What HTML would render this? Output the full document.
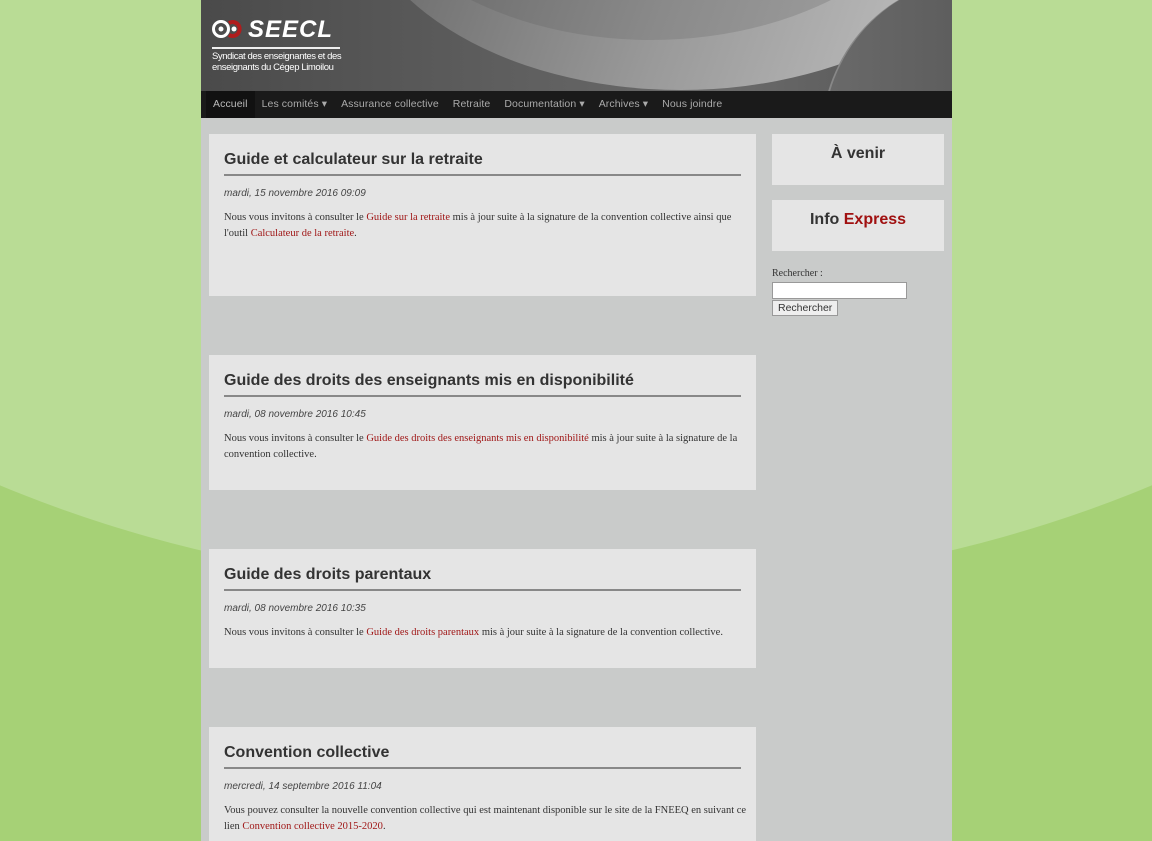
<!DOCTYPE html>
<html><head><meta charset="utf-8"><style>
*{margin:0;padding:0;box-sizing:border-box}
html,body{width:1152px;height:841px;overflow:hidden}
body{position:relative;background:#a6d176;font-family:"Liberation Sans",sans-serif}
.bgc{position:absolute;left:-423px;top:-594px;width:1998px;height:1188px;border-radius:50%;background:#b9dc95}
.wrap{position:absolute;left:201px;top:0;width:751px;height:841px;background:#c9cbca;overflow:hidden}
.hdr{height:91px;background:linear-gradient(90deg,#4a4a4a,#5e5e5e 40%,#6a6a6a 70%,#555);position:relative;overflow:hidden}
.sw{position:absolute;left:150px;top:-330px;width:660px;height:420px;border-radius:50%;background:linear-gradient(110deg,#707070 20%,#9a9a9a 55%,#b8b8b8 85%);}
.sw3{position:absolute;left:150px;top:-360px;width:600px;height:400px;border-radius:50%;background:linear-gradient(110deg,#666 20%,#8a8a8a 60%,#a5a5a5)}
.sw2{position:absolute;left:620px;top:-20px;width:300px;height:320px;border-radius:50%;border-left:2px solid #888;background:linear-gradient(90deg,#6a6a6a,#4e4e4e)}
.logo{position:absolute;left:11px;top:16px;color:#fff}
.logo b{font-size:24px;font-style:italic;letter-spacing:1px;margin-left:36px}
.logo .c{position:absolute;left:0;top:1px;width:32px;height:24px}
.logo .l{width:128px;height:2px;background:#eee;margin:3px 0 3px}
.logo small{display:block;font-size:9.5px;line-height:10.5px;letter-spacing:-0.4px}
.nav{height:27px;background:#1a1a1a;font-size:10.5px;color:#aaa;display:flex;align-items:center;padding-left:5px;letter-spacing:0.1px}
.nav span{padding:0 7px;line-height:27px}
.nav span.a{background:#111;color:#bbb}
.post{position:absolute;left:8px;width:547px;background:#e5e5e5;padding:17px 15px 16px}
.post h2{font-size:16px;color:#333;font-weight:bold;padding-bottom:5px;border-bottom:2px solid #888;margin-bottom:12px}
.post .d{font-size:10px;font-style:italic;color:#444;margin-bottom:11px}
.post p{font-family:"Liberation Serif",serif;font-size:10.5px;line-height:16px;color:#333;white-space:nowrap}
.post a{color:#a01818;text-decoration:none}
.side{position:absolute;left:571px;width:172px;background:#e5e5e5;text-align:center;font-size:16px;font-weight:bold;color:#333;height:51px;padding-top:11px}
.srch{position:absolute;left:571px;top:268px;font-family:"Liberation Serif",serif;font-size:10px;color:#333}
.srch .i{width:135px;height:17px;background:#fff;border:1px solid #999;margin-top:3px}
.srch .b{display:inline-block;font-family:"Liberation Sans",sans-serif;font-size:10.5px;border:1px solid #999;background:#eee;padding:1px 5px;margin-top:1px}
</style></head><body>
<div class="bgc"></div>
<div class="wrap">
<div class="hdr"><div class="sw"></div><div class="sw3"></div><div class="sw2"></div>
<div class="logo"><svg class="c" viewBox="0 0 32 24"><circle cx="9" cy="12" r="7.5" fill="none" stroke="#fff" stroke-width="3"/><path d="M17 6 A7 7 0 1 1 17 18" fill="none" stroke="#b01c1c" stroke-width="4"/><circle cx="9" cy="12" r="2.5" fill="#fff"/><circle cx="22" cy="12" r="2.5" fill="#fff"/></svg><b>SEECL</b><div class="l"></div><small>Syndicat des enseignantes et des<br>enseignants du Cégep Limoilou</small></div>
</div>
<div class="nav"><span class="a">Accueil</span><span>Les comités ▾</span><span>Assurance collective</span><span>Retraite</span><span>Documentation ▾</span><span>Archives ▾</span><span>Nous joindre</span></div>
<div class="post" style="top:134px;height:162px"><h2>Guide et calculateur sur la retraite</h2><div class="d">mardi, 15 novembre 2016 09:09</div><p>Nous vous invitons à consulter le <a>Guide sur la retraite</a> mis à jour suite à la signature de la convention collective ainsi que<br>l'outil <a>Calculateur de la retraite</a>.</p></div>
<div class="post" style="top:355px;height:135px"><h2>Guide des droits des enseignants mis en disponibilité</h2><div class="d">mardi, 08 novembre 2016 10:45</div><p>Nous vous invitons à consulter le <a>Guide des droits des enseignants mis en disponibilité</a> mis à jour suite à la signature de la<br>convention collective.</p></div>
<div class="post" style="top:549px;height:119px"><h2>Guide des droits parentaux</h2><div class="d">mardi, 08 novembre 2016 10:35</div><p>Nous vous invitons à consulter le <a>Guide des droits parentaux</a> mis à jour suite à la signature de la convention collective.</p></div>
<div class="post" style="top:727px;height:130px"><h2>Convention collective</h2><div class="d">mercredi, 14 septembre 2016 11:04</div><p>Vous pouvez consulter la nouvelle convention collective qui est maintenant disponible sur le site de la FNEEQ en suivant ce<br>lien <a>Convention collective 2015-2020</a>.</p></div>
<div class="side" style="top:134px">À venir</div>
<div class="side" style="top:200px">Info <span style="color:#a01010">Express</span></div>
<div class="srch">Rechercher :<div class="i"></div><span class="b">Rechercher</span></div>
</div>
</body></html>
